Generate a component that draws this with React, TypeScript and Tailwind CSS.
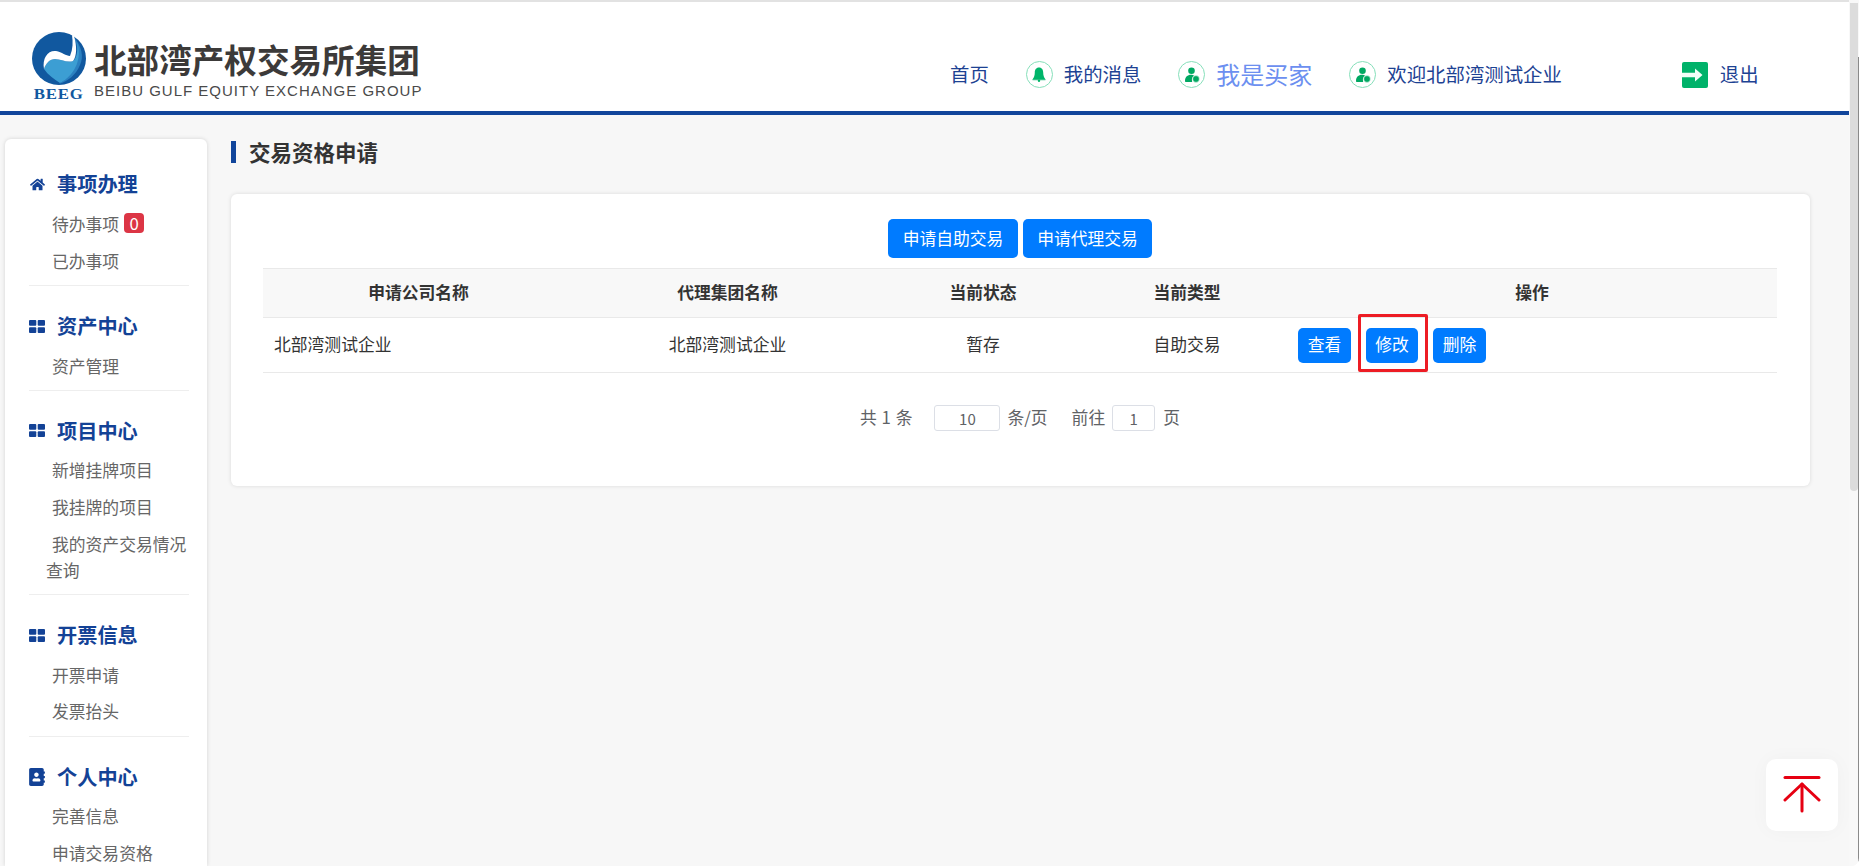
import React from "react";
import { FaHome, FaAddressBook } from "react-icons/fa";

function Logo() {
  return (
    <div className="flex flex-col items-center w-[54px] shrink-0">
      <svg width="54" height="54" viewBox="0 0 54 54">
        <ellipse cx="27" cy="26.5" rx="27" ry="26.5" fill="#11589f" />
        <path d="M41 4C50 14 52 25 48 33C44 43 36 49 27 52C38 44 44 36 46 24C46 16 44 10 41 4Z" fill="#2b80c0" />
        <path d="M12 37C14 31 18 27 23 27C29 27 35 31 41 29C45 26 46 18 45 10C50 24 45 42 28 51C22 47 16 43 12 37Z" fill="#3c9ed3" />
        <path d="M12 37C10 26 16 18 24 19C30 20 34 24 38 24C41 17 41 10 40 3L42 4C45 14 45 24 41 29C35 31 29 27 23 27C18 27 14 31 12 37Z" fill="#ffffff" />
      </svg>
      <span className="font-['Liberation_Serif',serif] font-bold text-[14px] leading-[13px] mt-[2px] tracking-[0.6px] text-[#11589f] scale-x-[1.2] whitespace-nowrap">BEEG</span>
    </div>
  );
}

function Ring({ children }: { children: React.ReactNode }) {
  return (
    <span className="flex items-center justify-center w-[27px] h-[27px] rounded-full border-[1.5px] border-[#86dfba] shrink-0">
      {children}
    </span>
  );
}

function Bell() {
  return (
    <svg width="14" height="15" viewBox="0 0 14 15" fill="#00b56a">
      <path d="M7 0.5C4 0.5 2.8 3 2.8 5.5C2.8 8.5 2 10.5 0.8 12H13.2C12 10.5 11.2 8.5 11.2 5.5C11.2 3 10 0.5 7 0.5Z" />
      <rect x="0.5" y="12.2" width="13" height="1" />
      <circle cx="7" cy="13.8" r="1.2" />
    </svg>
  );
}

function Users() {
  return (
    <svg width="16" height="16" viewBox="0 0 16 16" fill="#00a862">
      <circle cx="7.5" cy="3.8" r="3.3" />
      <path d="M1 14C1 10 3.6 7.8 7 7.8C8.4 7.8 9.4 8.2 10 8.8C8.2 9.8 7.4 11.8 8.2 15H2C1.4 15 1 14.6 1 14Z" />
      <circle cx="12" cy="12" r="3.4" stroke="#ffffff" strokeWidth="0.6" />
    </svg>
  );
}

function Exit() {
  return (
    <svg width="26" height="26" viewBox="0 0 26 26" className="shrink-0">
      <rect width="26" height="26" rx="2" fill="#00b26a" />
      <path d="M0 10.8H13V6.5L20.5 13L13 19.5V15.2H0Z" fill="#f2fff9" />
    </svg>
  );
}

function Grid() {
  return (
    <svg width="16" height="13" viewBox="0 0 16 13" fill="#134296" className="shrink-0">
      <rect x="0" y="0" width="7.3" height="5.8" rx="1" />
      <rect x="8.7" y="0" width="7.3" height="5.8" rx="1" />
      <rect x="0" y="7.2" width="7.3" height="5.8" rx="1" />
      <rect x="8.7" y="7.2" width="7.3" height="5.8" rx="1" />
    </svg>
  );
}

function Section({
  icon,
  title,
  items,
  last,
}: {
  icon: React.ReactNode;
  title: string;
  items: React.ReactNode[];
  last?: boolean;
}) {
  return (
    <div className={last ? "" : "border-b border-[#eeeeee] pb-[6px] mb-[25px]"}>
      <div className="flex items-center h-[30px]">
        <span className="flex items-center justify-center w-[16px] h-[18px] shrink-0">{icon}</span>
        <span className="ml-[12px] text-[20.2px] font-bold text-[#134296] whitespace-nowrap">{title}</span>
      </div>
      <ul className="mt-[6px]">
        {items.map((it, i) => (
          <li key={i} className="pl-[17px] indent-[6px] py-[5.4px] leading-[26px] text-[16.8px] text-[#666666]">
            {it}
          </li>
        ))}
      </ul>
    </div>
  );
}

function Sidebar() {
  return (
    <aside className="ml-[5px] mt-[24px] w-[202px] shrink-0 bg-white rounded-t-[6px] shadow-[0_0_4px_rgba(0,0,0,0.15)] pt-[30.6px] pl-[24px] pr-[18px]">
      <Section
        icon={<FaHome size={15} color="#134296" />}
        title="事项办理"
        items={[
          <span key="a">
            待办事项
            <span className="inline-block indent-0 ml-[5px] w-[20px] h-[20px] leading-[20px] text-center rounded-[4px] bg-[#dc3545] text-white align-[1px]">0</span>
          </span>,
          "已办事项",
        ]}
      />
      <Section icon={<Grid />} title="资产中心" items={["资产管理"]} />
      <Section icon={<Grid />} title="项目中心" items={["新增挂牌项目", "我挂牌的项目", "我的资产交易情况查询"]} />
      <Section icon={<Grid />} title="开票信息" items={["开票申请", "发票抬头"]} />
      <Section icon={<FaAddressBook size={18} color="#134296" />} title="个人中心" items={["完善信息", "申请交易资格"]} last />
    </aside>
  );
}

function Btn({ children, className = "" }: { children: React.ReactNode; className?: string }) {
  return (
    <button className={`bg-[#007bff] text-white text-[16.8px] rounded-[5px] whitespace-nowrap ${className}`}>
      {children}
    </button>
  );
}

export default function App() {
  return (
    <div className="relative flex w-[1859px] h-[866px] overflow-hidden bg-[#f7f7f7] rounded-br-[8px] font-['Noto_Sans_CJK_SC','Noto_Sans',sans-serif] text-[#333333]">
      <div className="flex flex-col flex-1 min-w-0">
        <header className="flex shrink-0 h-[115px] bg-white border-t-[2px] border-t-[#e2e2e2] border-b-[4px] border-b-[#11459b]">
          <div className="flex items-start pl-[32px] pt-[30px] w-[950px] shrink-0">
            <Logo />
            <div className="ml-[8px] flex flex-col">
              <span className="text-[32.6px] leading-[32px] mt-[11px] font-bold text-[#3c3a39] whitespace-nowrap">北部湾产权交易所集团</span>
              <span className="font-['Liberation_Sans',sans-serif] text-[15px] leading-[16px] mt-[8px] tracking-[1px] text-[#4a4a4a] whitespace-nowrap">BEIBU GULF EQUITY EXCHANGE GROUP</span>
            </div>
          </div>
          <nav className="flex items-center h-[27px] mt-[59px] text-[19.4px] text-[#1d4293] whitespace-nowrap">
            <span className="mb-[2px]">首页</span>
            <span className="ml-[37px]"><Ring><Bell /></Ring></span>
            <span className="ml-[11px] mb-[2px]">我的消息</span>
            <span className="ml-[37px]"><Ring><Users /></Ring></span>
            <span className="ml-[11px] mb-[2px] text-[24px] text-[#6c8ff0]">我是买家</span>
            <span className="ml-[37px]"><Ring><Users /></Ring></span>
            <span className="ml-[11px] mb-[2px]">欢迎北部湾测试企业</span>
            <span className="ml-[120px]"><Exit /></span>
            <span className="ml-[12px] mb-[2px]">退出</span>
          </nav>
        </header>
        <div className="flex flex-1 min-h-0">
          <Sidebar />
          <main className="flex-1 min-w-0 ml-[24px] mr-[39px]">
            <div className="flex items-center mt-[26px] h-[22px]">
              <span className="w-[5px] h-[22px] bg-[#11459b]" />
              <h1 className="ml-[13px] text-[21.5px] font-bold text-[#333333] leading-[22px]">交易资格申请</h1>
            </div>
            <section className="mt-[31px] h-[292px] bg-white rounded-[6px] shadow-[0_0_4px_rgba(0,0,0,0.12)] pt-[25px] pl-[32px] pr-[33px]">
              <div className="flex justify-center gap-[5px]">
                <Btn className="w-[130px] h-[39px]">申请自助交易</Btn>
                <Btn className="w-[129px] h-[39px]">申请代理交易</Btn>
              </div>
              <table className="mt-[10px] w-[1514px] table-fixed border-collapse text-[16.8px]">
                <colgroup>
                  <col className="w-[329px]" />
                  <col className="w-[271px]" />
                  <col className="w-[240px]" />
                  <col className="w-[184px]" />
                  <col className="w-[490px]" />
                </colgroup>
                <thead>
                  <tr className="h-[49px] bg-[#f8f8f8] border-y border-[#e9e9e9] font-bold">
                    <th className="font-bold pr-[18px]">申请公司名称</th>
                    <th className="font-bold">代理集团名称</th>
                    <th className="font-bold">当前状态</th>
                    <th className="font-bold pr-[16px]">当前类型</th>
                    <th className="font-bold">操作</th>
                  </tr>
                </thead>
                <tbody>
                  <tr className="h-[55px] border-b border-[#e9e9e9]">
                    <td className="pl-[11px]">北部湾测试企业</td>
                    <td className="text-center">北部湾测试企业</td>
                    <td className="text-center">暂存</td>
                    <td className="text-center pr-[16px]">自助交易</td>
                    <td className="pl-[11px]">
                      <div className="flex gap-[15px]">
                        <Btn className="w-[53px] h-[35px]">查看</Btn>
                        <span className="relative">
                          <Btn className="w-[52px] h-[35px]">修改</Btn>
                          <span className="absolute left-[-8px] right-[-10px] top-[-14px] bottom-[-9px] border-[3px] border-[#ed1c24] rounded-[2px]" />
                        </span>
                        <Btn className="w-[53px] h-[35px]">删除</Btn>
                      </div>
                    </td>
                  </tr>
                </tbody>
              </table>
              <div className="mt-[32px] flex justify-center items-center h-[26px] text-[16.8px] text-[#606266] whitespace-nowrap">
                <span className="[word-spacing:1px]">共 1 条</span>
                <input readOnly value="10" className="ml-[22px] w-[66px] h-[26px] border border-[#dcdfe6] rounded-[3px] text-center text-[15px] text-[#606266]" />
                <span className="ml-[7px]">条/页</span>
                <span className="ml-[24px]">前往</span>
                <input readOnly value="1" className="ml-[7px] w-[43px] h-[26px] border border-[#dcdfe6] rounded-[3px] text-center text-[15px] text-[#606266]" />
                <span className="ml-[8px]">页</span>
              </div>
            </section>
          </main>
        </div>
      </div>
      <div className="flex w-[10px] shrink-0 pl-[1px] bg-[#f8f8f8]">
        <div className="w-[8px] h-[488px] mt-[3px] bg-[#dcdcdc] rounded-b-[4px]" />
        <div className="w-[1px] mt-[57px] bg-[#8a8a8a]" />
      </div>
      <div className="absolute right-[21px] bottom-[35px] w-[72px] h-[72px] bg-white rounded-[10px] shadow-[0_0_20px_rgba(0,0,0,0.03)] flex items-center justify-center">
        <svg width="38" height="38" viewBox="0 0 38 38" fill="none" stroke="#e60012" strokeWidth="3" strokeLinecap="round" strokeLinejoin="round">
          <path d="M2 1.5H36" />
          <path d="M2 24L19 8L36 24" />
          <path d="M19 8V35" />
        </svg>
      </div>
    </div>
  );
}
